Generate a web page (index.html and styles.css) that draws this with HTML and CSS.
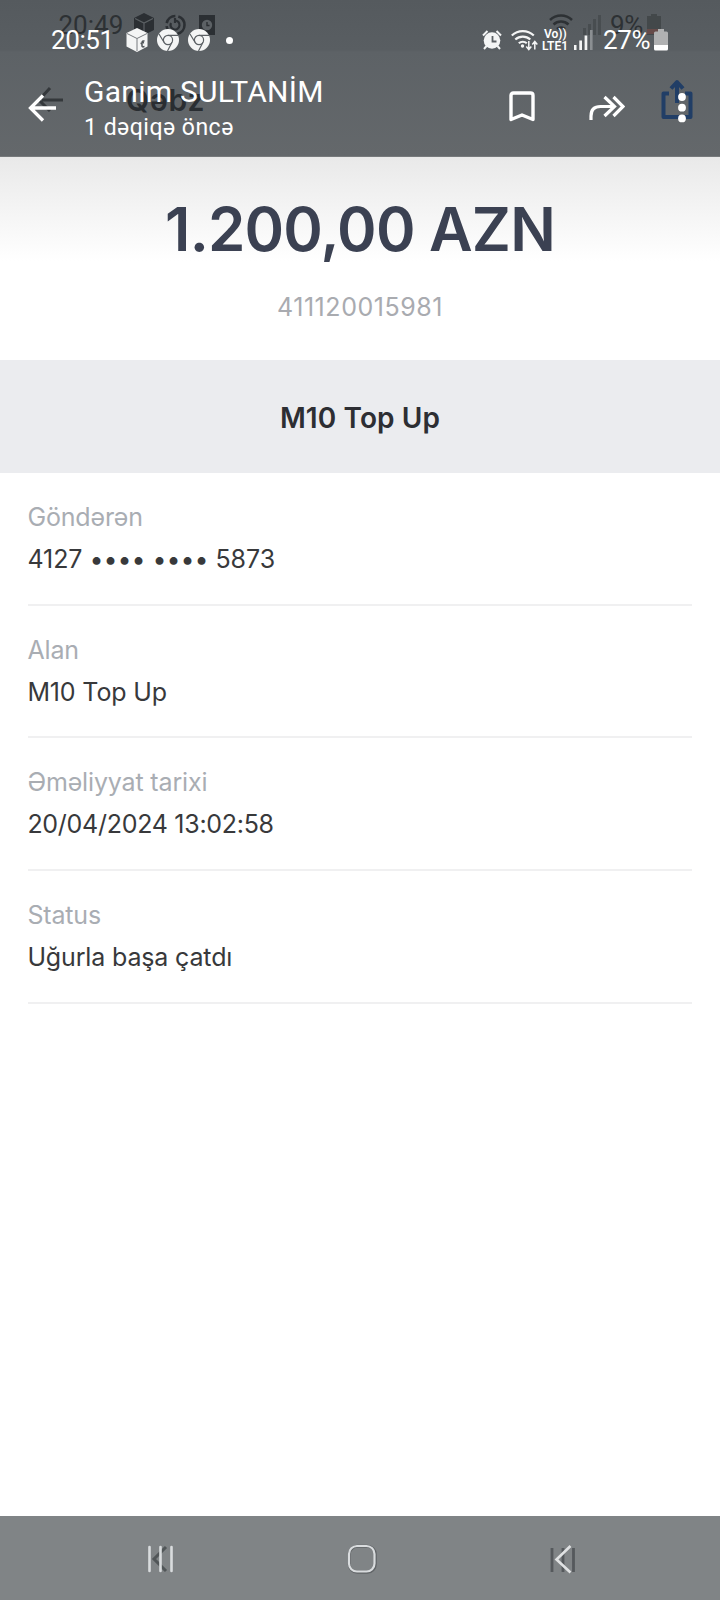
FILE: index.html
```html
<!DOCTYPE html>
<html lang="az">
<head>
<meta charset="utf-8">
<title>Qəbz</title>
<link rel="stylesheet" href="styles.css">
</head>
<body>
<div class="screen">
  <header class="top">
    <!-- receipt screen's own bars, dimmed behind the viewer chrome -->
    <div class="under">
      <span class="under-time">20:49</span>
      <svg class="under-art" width="720" height="156" viewBox="0 0 720 156">
        <g fill="#2b2f33">
          <path d="M144 13l10 5v12l-10 5-10-5V18z"/>
          <path d="M199 15h16v20h-16z"/>
        </g>
        <path d="M135 18.500l9 4.500 9-4.500M144 23v11" fill="none" stroke="#5c6165" stroke-width="1.200"/>
        <g fill="none" stroke="#2b2f33" stroke-width="2.600">
          <circle cx="175.500" cy="25" r="9" stroke-dasharray="12 3"/>
          <path d="M171 23a4.500 4.500 0 1 0 4-2.500M175 18v5" stroke-width="2.200"/>
        </g>
        <circle cx="207" cy="25" r="5.200" fill="#5c6165"/>
        <path d="M207 22v3.500h2.500" fill="none" stroke="#2b2f33" stroke-width="1.400"/>
        <path d="M63 100H42M50 88l-11 12 11 11" fill="none" stroke="#34383b" stroke-width="3"/>
        <g fill="none" stroke="#2d3134" stroke-width="2.500">
          <path d="M550 20a16 16 0 0 1 22 0M553.500 24.500a11 11 0 0 1 15 0M557 29a6 6 0 0 1 8 0"/>
        </g>
        <path d="M583 31v-3h3v7h-3zM588 24h3v11h-3zM593 19h3v16h-3zM598 15h3v20h-3z" fill="#484d50"/>
        <path d="M647 16h4v-2h6v2h4v19h-14z" fill="#43484a"/>
        <path d="M647 29h14v5h-14z" fill="#664b49"/>
        <g fill="none" stroke="#213e66" stroke-width="4" stroke-linejoin="round">
          <path d="M669 93.500h-5.500V117h27V93.500H685M677 103V84M671 88.500l6-6.500 6 6.500"/>
        </g>
      </svg>
      <span class="under-title">Qəbz</span>
      <span class="under-battery">9%</span>
    </div>

    <div class="status">
      <span class="clock">20:51</span>
      <svg class="s-cube" width="22" height="24" viewBox="0 0 22 24">
        <path d="M11 0l10.500 5v13.500L11 24 .5 18.500V5z" fill="#f4f5f5"/>
        <path d="M1 5.500l10 5 10-5M11 10.500V23" fill="none" stroke="#777b7f" stroke-width="1"/>
        <path d="M18.500 13q-2.500-.5-2.500 1.800V18q0 1.500 2.500.5M14.500 15.500l3.500-1" fill="none" stroke="#4f5458" stroke-width="1.500"/>
      </svg>
      <svg class="s-chrome" width="22" height="22" viewBox="0 0 22 22">
        <circle cx="11" cy="11" r="11" fill="#f4f5f5"/>
        <g fill="none" stroke="#5c6165" stroke-width="1.200"><circle cx="11" cy="11" r="4.600"/><path d="M11 6.400h10M7 13.300L2 5M15 13.300L10.500 22"/></g>
      </svg>
      <svg class="s-chrome" width="22" height="22" viewBox="0 0 22 22">
        <circle cx="11" cy="11" r="11" fill="#f4f5f5"/>
        <g fill="none" stroke="#5c6165" stroke-width="1.200"><circle cx="11" cy="11" r="4.600"/><path d="M11 6.400h10M7 13.300L2 5M15 13.300L10.500 22"/></g>
      </svg>
      <span class="more-dot"></span>
      <svg class="s-alarm" width="20" height="20" viewBox="0 0 20 20">
        <circle cx="10" cy="10.500" r="8.300" fill="#f4f5f5"/>
        <path d="M1 5.500L5.500 1M19 5.500L14.500 1M4.500 16l-2.500 3M15.500 16l2.500 3" fill="none" stroke="#f4f5f5" stroke-width="2"/>
        <path d="M10.500 6v5.500h4" fill="none" stroke="#5c6165" stroke-width="1.800"/>
      </svg>
      <svg class="s-wifi" width="27" height="22" viewBox="0 0 27 22">
        <g fill="none" stroke="#f4f5f5" stroke-width="2.200">
          <path d="M.8 6.500a16 16 0 0 1 22 0M4.300 10.500a11 11 0 0 1 15 0M7.800 14.300a6 6 0 0 1 8 0"/>
        </g>
        <circle cx="11.500" cy="17" r="1.700" fill="#f4f5f5"/>
        <path d="M17.800 12v8M15.300 17.500l2.500 3 2.500-3M23.800 20.500v-8M21.300 15.500l2.500-3 2.500 3" fill="none" stroke="#f4f5f5" stroke-width="1.500"/>
      </svg>
      <span class="volte"><b class="vo">Vo))</b><b>LTE1</b></span>
      <svg class="s-signal" width="19" height="20" viewBox="0 0 19 20">
        <path d="M0 15h2.500v5H0zM5.300 10.500h2.700V20H5.300zM10.600 5.500h2.700V20h-2.700z" fill="#f4f5f5"/>
        <path d="M16 0h2.600v20H16z" fill="#8b8f92"/>
      </svg>
      <span class="percent">27%</span>
      <svg class="s-battery" width="14" height="22" viewBox="0 0 14 22">
        <path d="M0 4q0-1.500 1.500-1.500H4V0h6v2.500h2.500Q14 2.500 14 4v12H0z" fill="#b0b1b2"/>
        <path d="M0 16h14v4q0 1.500-1.500 1.500h-11Q0 21.500 0 20z" fill="#fff"/>
      </svg>
    </div>

    <div class="bar">
      <svg class="b-back" width="29" height="28" viewBox="0 0 29 28">
        <path d="M28 14H3M15 1.500L2.500 14 15 26.500" fill="none" stroke="#fff" stroke-width="3.300"/>
      </svg>
      <div class="who">
        <span class="name">Ganim SULTANİM</span>
        <span class="ago">1 dəqiqə öncə</span>
      </div>
      <svg class="b-mark" width="26" height="31" viewBox="0 0 26 31">
        <path d="M4.500 2h17Q24 2 24 4.500V28.500L13 24 2 28.500V4.500Q2 2 4.500 2z" fill="none" stroke="#fff" stroke-width="3.400" stroke-linejoin="round"/>
      </svg>
      <svg class="b-forward" width="36" height="26" viewBox="0 0 36 26">
        <path d="M2 25V21Q2 11.500 11.500 11.500H25M15.500 2l10 9.500-10 9.500M24.500 2l9.500 9.500-9.500 9.500" fill="none" stroke="#fff" stroke-width="3.200"/>
      </svg>
      <svg class="b-more" width="8" height="30" viewBox="0 0 8 30">
        <g fill="#fff"><circle cx="4" cy="4" r="3.900"/><circle cx="4" cy="14.700" r="3.900"/><circle cx="4" cy="25.400" r="3.900"/></g>
      </svg>
    </div>
  </header>

  <main class="receipt">
    <section class="summary">
      <div class="amount">1.200,00 AZN</div>
      <div class="reference">411120015981</div>
    </section>
    <h1 class="service">M10 Top Up</h1>
    <dl class="details">
      <div class="row"><dt>Göndərən</dt><dd class="card">4127 •••• •••• 5873</dd></div>
      <div class="row"><dt>Alan</dt><dd>M10 Top Up</dd></div>
      <div class="row"><dt>Əməliyyat tarixi</dt><dd class="date">20/04/2024 13:02:58</dd></div>
      <div class="row"><dt>Status</dt><dd>Uğurla başa çatdı</dd></div>
    </dl>
  </main>

  <nav class="nav">
    <svg width="30" height="30" viewBox="0 0 30 30">
      <path d="M21 3L9 15l12 12" fill="none" stroke="#515658" stroke-width="3"/>
      <path d="M4.500 3v24M15.500 3v24M26.500 3v24" fill="none" stroke="#d9dcde" stroke-width="2.600" stroke-linecap="round"/>
    </svg>
    <svg width="30" height="30" viewBox="0 0 30 30">
      <rect x="2.300" y="2.300" width="26" height="26" rx="8" fill="none" stroke="#606467" stroke-width="3"/>
      <rect x="2" y="2" width="25.500" height="25.500" rx="8" fill="none" stroke="#d9dcde" stroke-width="2.200"/>
    </svg>
    <svg width="30" height="30" viewBox="0 0 30 30">
      <path d="M4 4v24M15 4v24M25.500 4v24" fill="none" stroke="#55595c" stroke-width="2.800"/>
      <path d="M22.500 2L8.500 15.500l14 13" fill="none" stroke="#e0e2e3" stroke-width="2.600"/>
    </svg>
  </nav>
</div>
</body>
</html>
```

FILE: styles.css
```css
* { box-sizing: border-box; }
body { margin: 0; background: #fff; }
svg { display: block; flex: none; }

.screen {
  width: 720px;
  height: 1600px;
  display: flex;
  flex-direction: column;
  overflow: hidden;
  font-family: Inter, "Noto Sans", sans-serif;
}

/* viewer chrome */
.top {
  position: relative;
  height: 157px;
  flex: none;
  color: #fff;
  font-family: Roboto, "Noto Sans", sans-serif;
  background: linear-gradient(#555a5e 0, #595e62 50px, #5d6266 52px, #64686b 156px);
  border-bottom: 1px solid #777a7c;
}
.under { position: absolute; inset: 0; color: #2d3134; line-height: 1; white-space: nowrap; }
.under-art { position: absolute; inset: 0; }
.under-time { position: absolute; left: 58.5px; top: 12px; font-size: 26px; }
.under-title { position: absolute; left: 126px; top: 85px; font: 600 30px/1 Inter, sans-serif; letter-spacing: .8px; color: #292d31; }
.under-battery { position: absolute; left: 610px; top: 12px; font-size: 26px; letter-spacing: -.3px; }

.status {
  position: relative;
  display: flex;
  height: 80px;
  padding: 29px 0 0 51px;
  line-height: 1;
}
.clock { width: 75px; font-size: 26px; line-height: 23px; letter-spacing: -.4px; }
.s-chrome { margin-left: 9px; }
.s-cube { margin-top: -1px; }
.more-dot { width: 7px; height: 7px; margin: 8px 0 0 16px; border-radius: 50%; background: #fff; }
.s-alarm { margin: 1px 0 0 249px; }
.s-wifi { margin-left: 9px; }
.volte { display: flex; flex-direction: column; width: 27px; margin-left: 4px; font-size: 12px; line-height: 11.5px; }
.volte b { font-weight: 600; }
.volte .vo { padding-left: 2px; }
.s-signal { margin: 1px 0 0 5px; }
.percent { width: 50px; margin-left: 10px; font-size: 26px; line-height: 23px; letter-spacing: -.4px; }
.s-battery { margin-left: 1px; }

.bar { position: relative; display: flex; height: 76px; padding-left: 28px; }
.b-back { margin-top: 13.5px; }
.who { display: flex; flex-direction: column; width: 424px; padding-left: 27px; margin-top: -6px; white-space: nowrap; }
.name { font-size: 30px; line-height: 36px; letter-spacing: .27px; }
.ago { font-size: 23px; line-height: 36px; letter-spacing: .5px; }
.b-mark { margin: 11px 0 0 28px; }
.b-forward { margin: 15px 0 0 54px; }
.b-more { margin: 12.5px 0 0 53px; }

/* receipt */
.receipt { flex: 1; background: linear-gradient(#e9e9e9, #fff 104px); }
.summary { height: 203px; padding-top: 36px; text-align: center; }
.amount { font-size: 60px; font-weight: 600; line-height: 72px; letter-spacing: -.8px; color: #3b4152; }
.reference { margin-top: 27px; font-size: 25px; line-height: 30px; letter-spacing: .55px; color: #a9abb0; }
.service {
  height: 113px;
  margin: 0;
  background: #ebecef;
  color: #2d2e33;
  font-size: 28px;
  font-weight: 600;
  line-height: 116px;
  letter-spacing: .1px;
  text-align: center;
}
.details { margin: 0; padding: 0 28px; }
.row { height: 132.7px; padding-top: 27px; border-bottom: 2px solid #f0f0f1; white-space: nowrap; }
dt, dd { margin-left: -.6px; font-size: 25px; line-height: 34px; letter-spacing: -.15px; }
dt { color: #a9adb3; }
dd { padding-top: 8px; color: #38393b; }
.card { letter-spacing: -.05px; }
.date { letter-spacing: -.28px; }

/* system navigation */
.nav {
  display: flex;
  flex: none;
  height: 84px;
  padding: 28px 0 0 145px;
  gap: 171.5px;
  background: #808486;
}
```
